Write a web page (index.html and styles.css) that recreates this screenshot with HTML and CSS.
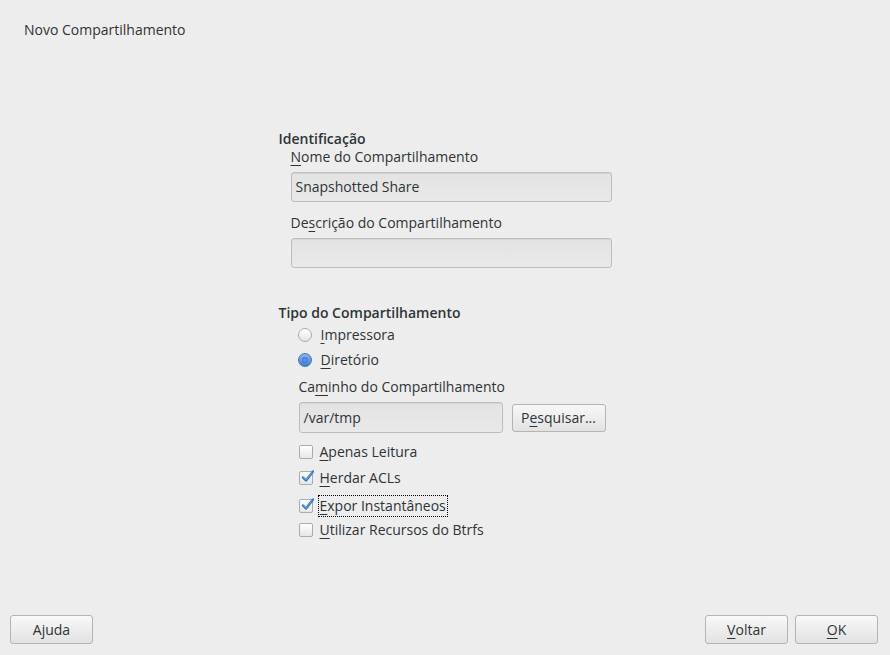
FILE: index.html
```
<!DOCTYPE html>
<html lang="pt">
<head>
<meta charset="utf-8">
<title>Novo Compartilhamento</title>
<link rel="stylesheet" href="styles.css">
</head>
<body>
<div class="window">
  <header class="title">Novo Compartilhamento</header>
  <main class="content">
    <div class="form">
      <div class="section-title">Identificação</div>
      <div class="group">
        <div class="label"><span class="mn">N</span>ome do Compartilhamento</div>
        <div class="entry">Snapshotted Share</div>
        <div class="label label-gap">De<span class="mn">s</span>crição do Compartilhamento</div>
        <div class="entry"></div>
      </div>

      <div class="section-title section-gap">Tipo do Compartilhamento</div>
      <div class="radios">
        <div class="row radio-row">
          <span class="radio"></span>
          <span class="text"><span class="mn">I</span>mpressora</span>
        </div>
        <div class="row radio-row">
          <span class="radio checked"><span class="dot"></span></span>
          <span class="text"><span class="mn">D</span>iretório</span>
        </div>
      </div>
      <div class="path">
        <div class="label">Ca<span class="mn">m</span>inho do Compartilhamento</div>
        <div class="path-row">
          <div class="entry entry-path">/var/tmp</div>
          <div class="button button-browse">P<span class="mn">e</span>squisar...</div>
        </div>
        <div class="checks">
          <div class="row check-row">
            <span class="check"></span>
            <span class="text"><span class="mn">A</span>penas Leitura</span>
          </div>
          <div class="row check-row">
            <span class="check"><svg viewBox="0 0 14 14" width="14" height="14"><path d="M3 7.5 L6 10.5 L13 1.5" fill="none" stroke="#2f6fc4" stroke-width="2.4" stroke-linecap="round" stroke-linejoin="round"/><path d="M3.5 7.5 L6 10 L12.5 2" fill="none" stroke="#7fb0ec" stroke-width="0.8" stroke-linecap="round" stroke-linejoin="round"/></svg></span>
            <span class="text"><span class="mn">H</span>erdar ACLs</span>
          </div>
          <div class="row check-row check-focus">
            <span class="check"><svg viewBox="0 0 14 14" width="14" height="14"><path d="M3 7.5 L6 10.5 L13 1.5" fill="none" stroke="#2f6fc4" stroke-width="2.4" stroke-linecap="round" stroke-linejoin="round"/><path d="M3.5 7.5 L6 10 L12.5 2" fill="none" stroke="#7fb0ec" stroke-width="0.8" stroke-linecap="round" stroke-linejoin="round"/></svg></span>
            <span class="text focus"><span class="mn">E</span>xpor Instantâneos</span>
          </div>
          <div class="row check-row check-last">
            <span class="check"></span>
            <span class="text"><span class="mn">U</span>tilizar Recursos do Btrfs</span>
          </div>
        </div>
      </div>
    </div>
  </main>
  <footer class="footer">
    <div class="button button-foot">Ajuda</div>
    <div class="foot-right">
      <div class="button button-foot"><span class="mn">V</span>oltar</div>
      <div class="button button-foot"><span class="mn">O</span>K</div>
    </div>
  </footer>
</div>
</body>
</html>
```

FILE: styles.css
```
* { box-sizing: border-box; }
html, body {
  margin: 0;
  padding: 0;
  background: #ededed;
}
body {
  font-family: "Open Sans", "Noto Sans", sans-serif;
  font-size: 14px;
  color: #2e3436;
  line-height: 18px;
}
.window {
  width: 890px;
  height: 655px;
  display: flex;
  flex-direction: column;
}
.title {
  padding: 21px 0 0 24px;
  height: 39px;
}
.content {
  flex: 1;
  display: flex;
  justify-content: center;
  padding-top: 91px;
}
.form {
  width: 333px;
}
.section-title {
  font-weight: 600;
  height: 18px;
}
.section-gap { margin-top: 36px; }
.group { padding-left: 12px; }
.label { height: 18px; white-space: nowrap; }
.label-gap { margin-top: 12px; }
.mn {
  text-decoration: underline;
  text-underline-offset: 3px;
}
.entry {
  margin-top: 6px;
  height: 30px;
  border: 1px solid #bdbdbd;
  border-radius: 3px;
  background: linear-gradient(#e3e3e3, #e9e9e9);
  box-shadow: inset 0 1px 1px rgba(0,0,0,0.06);
  padding: 0 4px;
  display: flex;
  align-items: center;
  width: 321px;
}
.radios { padding-left: 19px; margin-top: 0; }
.row {
  display: flex;
  align-items: center;
}
.radio-row { height: 25px; }
.radio {
  width: 14px;
  height: 14px;
  border-radius: 50%;
  border: 1px solid #a9a9a9;
  background: linear-gradient(#ffffff, #e4e4e4);
  margin-right: 8px;
  display: flex;
  align-items: center;
  justify-content: center;
}
.radio.checked {
  border-color: #4a72a8;
  background: linear-gradient(#8fb6ea, #3d7dd8);
}
.dot {
  width: 6px;
  height: 6px;
  border-radius: 50%;
  background: radial-gradient(#5aa0f2, #2f6ad0);
}
.path { padding-left: 20px; margin-top: 6px; }
.path-row {
  display: flex;
  align-items: center;
  margin-top: 6px;
  gap: 9px;
}
.entry-path {
  margin-top: 0;
  width: 204px;
  height: 31px;
}
.button {
  height: 28px;
  border: 1px solid #b4b4b4;
  border-radius: 3px;
  background: linear-gradient(#f8f8f8, #e2e2e2);
  display: flex;
  align-items: center;
  justify-content: center;
}
.button-browse { width: 94px; }
.checks { margin-top: 6px; }
.check-row { height: 26px; }
.check-focus { height: 28px; margin-top: 1px; }
.check-last { height: 22px; margin-top: -1px; }
.check {
  width: 14px;
  height: 14px;
  border: 1px solid #ababab;
  border-radius: 2px;
  background: linear-gradient(#ffffff, #e6e6e6);
  margin-right: 6px;
  position: relative;
}
.check svg {
  position: absolute;
  left: 0;
  top: -2px;
}
.text { padding: 1px 1px; }
.focus { outline: 1px dotted #000; outline-offset: 0; }
.footer {
  display: flex;
  justify-content: space-between;
  padding: 0 12px 11px 10px;
}
.foot-right { display: flex; gap: 7px; }
.button-foot { width: 83px; height: 29px; }
```
